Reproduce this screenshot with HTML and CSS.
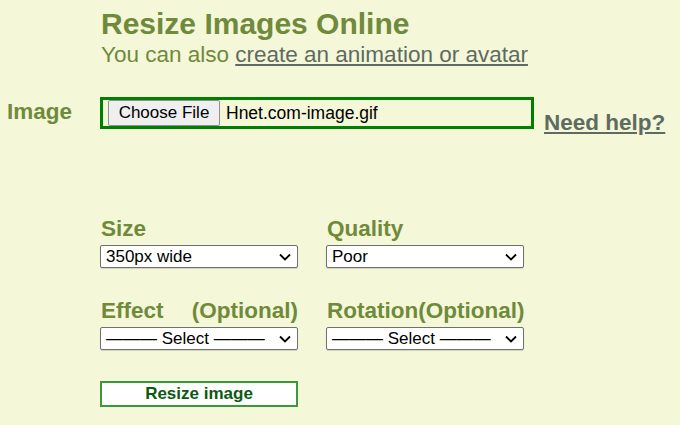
FILE: index.html
```html
<!DOCTYPE html>
<html>
<head>
<meta charset="utf-8">
<link rel="stylesheet" href="styles.css">
</head>
<body>
<div class="page">
  <header class="head">
    <h1 class="title">Resize Images Online</h1>
    <p class="sub">You can also <a class="sublink" href="#">create an animation or avatar</a></p>
  </header>
  <div class="image-row">
    <div class="label img-label">Image</div>
    <div class="filebox">
      <span class="choose">Choose File</span>
      <span class="fname">Hnet.com-image.gif</span>
    </div>
    <a class="help" href="#">Need help?</a>
  </div>
  <div class="options">
    <div class="field">
      <div class="label">Size</div>
      <div class="select"><span>350px wide</span><svg class="chev" viewBox="0 0 12 8"><path d="M1 1.5 L6 6.5 L11 1.5" fill="none" stroke="#000" stroke-width="1.8"/></svg></div>
    </div>
    <div class="field">
      <div class="label">Quality</div>
      <div class="select"><span>Poor</span><svg class="chev" viewBox="0 0 12 8"><path d="M1 1.5 L6 6.5 L11 1.5" fill="none" stroke="#000" stroke-width="1.8"/></svg></div>
    </div>
    <div class="field">
      <div class="label just"><span>Effect</span><span>(Optional)</span></div>
      <div class="select"><span>——— Select ———</span><svg class="chev" viewBox="0 0 12 8"><path d="M1 1.5 L6 6.5 L11 1.5" fill="none" stroke="#000" stroke-width="1.8"/></svg></div>
    </div>
    <div class="field">
      <div class="label">Rotation(Optional)</div>
      <div class="select"><span>——— Select ———</span><svg class="chev" viewBox="0 0 12 8"><path d="M1 1.5 L6 6.5 L11 1.5" fill="none" stroke="#000" stroke-width="1.8"/></svg></div>
    </div>
  </div>
  <div class="submit-row">
    <button class="submit">Resize image</button>
  </div>
</div>
</body>
</html>
```
FILE: styles.css
```css
html, body {
  margin: 0;
  padding: 0;
  background: #f5f7d9;
}
body {
  font-family: "Liberation Sans", Arial, sans-serif;
  width: 680px;
  height: 425px;
  overflow: hidden;
}
.page {
  display: flex;
  flex-direction: column;
}
.head {
  padding: 8px 0 0 101px;
}
.title {
  margin: 0;
  font-size: 30px;
  line-height: 32px;
  font-weight: bold;
  color: #6f8a3a;
}
.sub {
  margin: 3px 0 0;
  font-size: 22.5px;
  line-height: 24px;
  color: #6f8a3a;
}
.sublink {
  color: #5d6b61;
  text-decoration: underline;
}
.image-row {
  display: flex;
  align-items: flex-start;
  margin-top: 30px;
}
.label {
  font-size: 22.5px;
  line-height: 23px;
  font-weight: bold;
  color: #6f8a3a;
}
.img-label {
  width: 100px;
  padding: 3px 0 0 7px;
  box-sizing: border-box;
}
.filebox {
  width: 434px;
  height: 32px;
  box-sizing: border-box;
  border: 3px solid #008000;
  display: flex;
  align-items: center;
  padding-left: 5px;
}
.choose {
  display: inline-flex;
  align-items: center;
  justify-content: center;
  width: 112px;
  height: 26px;
  box-sizing: border-box;
  border: 1px solid #8f8f8f;
  border-radius: 2px;
  background: #efefef;
  font-size: 17px;
  color: #000;
}
.fname {
  margin-left: 6px;
  font-size: 17.5px;
  color: #000;
}
.help {
  margin: 13px 0 0 10px;
  font-size: 22.5px;
  line-height: 26px;
  font-weight: bold;
  color: #5d6b61;
  text-decoration: underline;
}
.options {
  display: grid;
  grid-template-columns: 198px 198px;
  column-gap: 28px;
  row-gap: 31px;
  padding-left: 100px;
  margin-top: 81px;
}
.field {
  display: flex;
  flex-direction: column;
  gap: 5px;
}
.field .label {
  padding-left: 1px;
}
.just {
  display: flex;
  justify-content: space-between;
}
.select {
  height: 23px;
  box-sizing: border-box;
  background: #fff;
  border: 1px solid #707070;
  border-radius: 2px;
  box-shadow: 0 1px 1px rgba(0,0,0,0.15);
  display: flex;
  align-items: center;
  justify-content: space-between;
  padding: 0 6px 0 5px;
  font-size: 17px;
  color: #000;
}
.chev {
  width: 12px;
  height: 8px;
}
.submit-row {
  padding-left: 100px;
  margin-top: 31px;
}
.submit {
  width: 198px;
  height: 26px;
  background: #fff;
  border: 2px solid #3a9a3a;
  font-family: "Liberation Sans", Arial, sans-serif;
  font-size: 17px;
  font-weight: bold;
  color: #0b5a10;
  padding: 0;
}
```
